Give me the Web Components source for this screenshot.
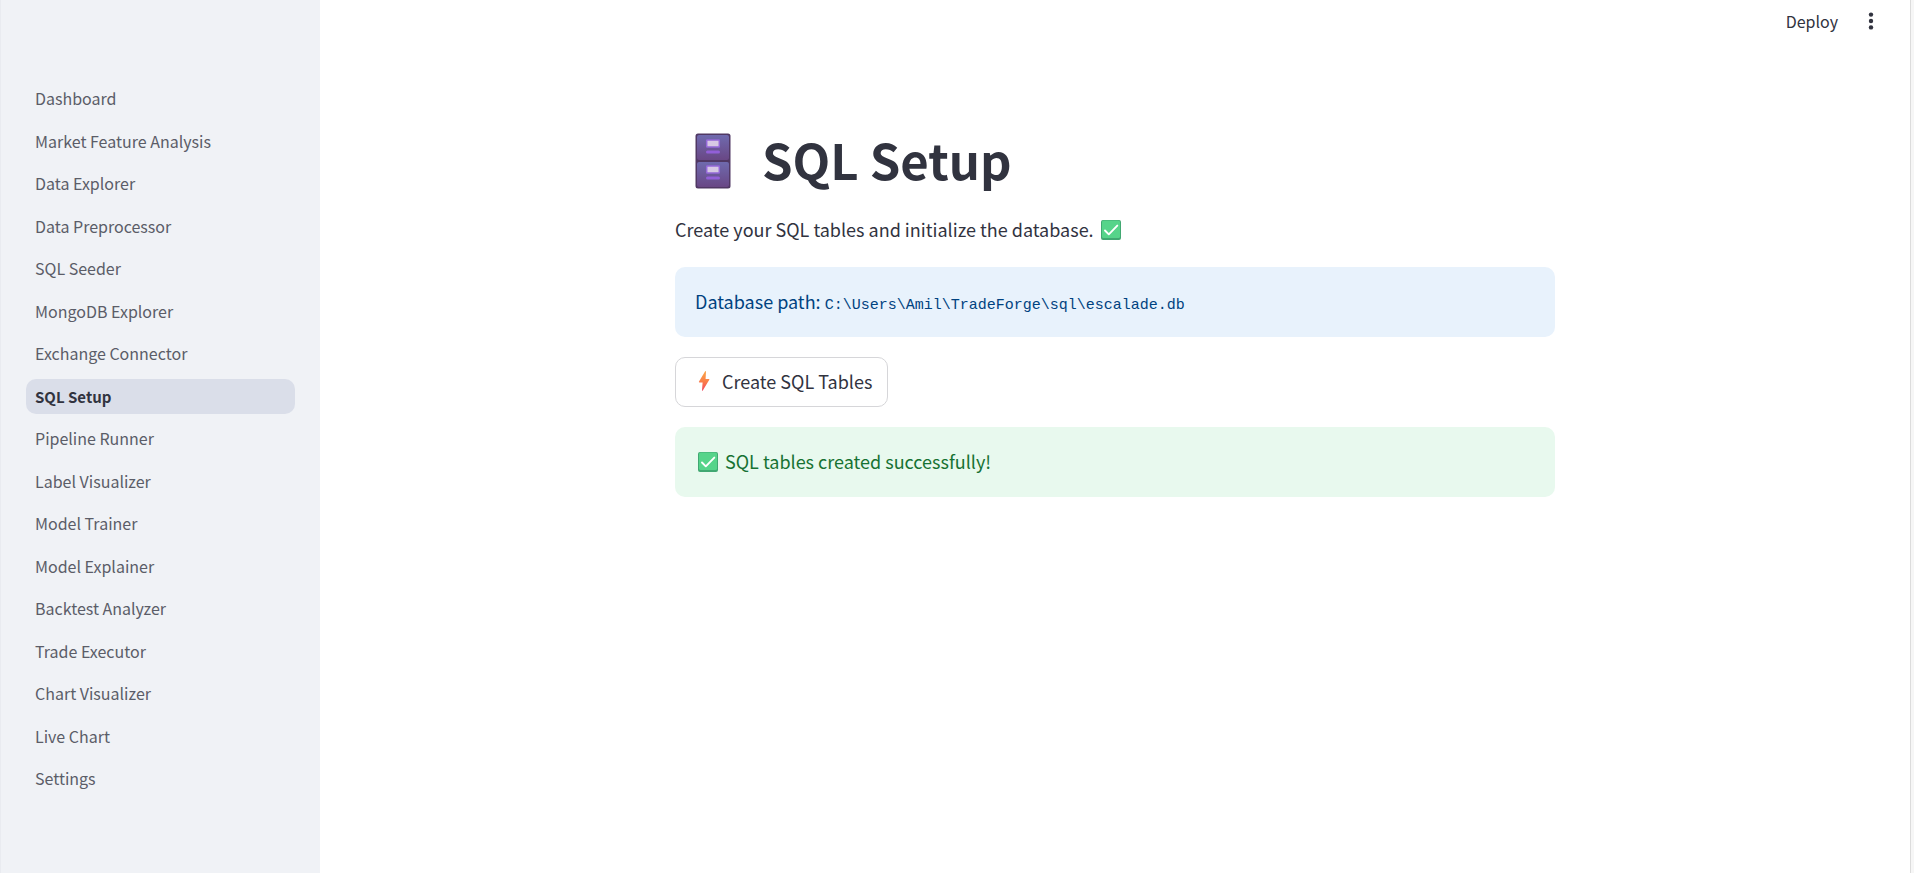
<!DOCTYPE html>
<html lang="en">
<head>
<meta charset="utf-8">
<title>SQL Setup</title>
<style>
  html, body { margin: 0; height: 100%; }
  body {
    background: #fff;
    color: #31333f;
    font-family: "Noto Sans CJK SC", "Open Sans", sans-serif;
    font-size: 18px;
    line-height: 30px;
  }
</style>
</head>
<body>
<app-shell>
  <side-nav slot="sidebar">
    <nav-item>Dashboard</nav-item>
    <nav-item>Market Feature Analysis</nav-item>
    <nav-item>Data Explorer</nav-item>
    <nav-item>Data Preprocessor</nav-item>
    <nav-item>SQL Seeder</nav-item>
    <nav-item>MongoDB Explorer</nav-item>
    <nav-item>Exchange Connector</nav-item>
    <nav-item active>SQL Setup</nav-item>
    <nav-item>Pipeline Runner</nav-item>
    <nav-item>Label Visualizer</nav-item>
    <nav-item>Model Trainer</nav-item>
    <nav-item>Model Explainer</nav-item>
    <nav-item>Backtest Analyzer</nav-item>
    <nav-item>Trade Executor</nav-item>
    <nav-item>Chart Visualizer</nav-item>
    <nav-item>Live Chart</nav-item>
    <nav-item>Settings</nav-item>
  </side-nav>
  <top-bar slot="header"></top-bar>
  <page-title>SQL Setup</page-title>
  <page-text>Create your SQL tables and initialize the database. <check-icon></check-icon></page-text>
  <alert-box kind="info">Database path: <inline-code>C:\Users\Amil\TradeForge\sql\escalade.db</inline-code></alert-box>
  <action-button>Create SQL Tables</action-button>
  <alert-box kind="success"><check-icon></check-icon> SQL tables created successfully!</alert-box>
</app-shell>

<script>
  const define = (name, html, setup) => {
    const template = document.createElement("template");
    template.innerHTML = html;
    customElements.define(name, class extends HTMLElement {
      constructor() {
        super();
        this.attachShadow({ mode: "open" }).append(template.content.cloneNode(true));
      }
      connectedCallback() { if (setup) setup(this); }
    });
  };

  define("app-shell", `
    <style>
      :host { display: grid; grid-template-columns: 320px minmax(0, 1fr) 4px; min-height: 100%; }
      aside { background: #f0f2f6; border-left: 1px solid #e9ebf0; }
      .content { min-width: 0; }
      main { box-sizing: border-box; max-width: 920px; margin: 0 auto; padding: 60px 20px; display: flex; flex-direction: column; gap: 20px; }
      .gutter { background: #f6f6f6; border-left: 1px solid #dcdcdc; }
    </style>
    <aside><slot name="sidebar"></slot></aside>
    <div class="content">
      <slot name="header"></slot>
      <main><slot></slot></main>
    </div>
    <div class="gutter"></div>`);

  define("side-nav", `
    <style>
      :host { display: block; padding: 81px 25px 60px; }
      nav { display: flex; flex-direction: column; justify-content: space-between; min-height: 715px; }
    </style>
    <nav aria-label="Pages"><slot></slot></nav>`);

  define("nav-item", `
    <style>
      :host { display: block; }
      a { display: block; padding: 0 9px; border-radius: 10px; font-size: 16px; line-height: 35px; color: #5b5d68; text-decoration: none; white-space: nowrap; }
      :host([active]) a { background: #dadee9; color: #31333f; font-size: 15px; font-weight: 600; }
    </style>
    <a href="#"><slot></slot></a>`, el => {
      const link = el.shadowRoot.querySelector("a");
      link.setAttribute("href", "#" + el.textContent.trim().toLowerCase().replace(/\s+/g, "-"));
      if (el.hasAttribute("active")) link.setAttribute("aria-current", "page");
    });

  define("top-bar", `
    <style>
      :host { display: block; }
      header { display: flex; justify-content: flex-end; align-items: center; gap: 19px; padding: 4px 26px 6px 0; }
      button { border: 0; padding: 0; background: none; color: #31333f; font: inherit; font-size: 16px; line-height: 34px; }
      .menu { display: flex; align-items: center; justify-content: center; width: 27px; height: 34px; }
    </style>
    <header>
      <button type="button">Deploy</button>
      <button type="button" class="menu" aria-label="Main menu">
        <svg width="6" height="18" viewBox="0 0 6 18" fill="#31333f"><circle cx="3" cy="2.6" r="2.2"/><circle cx="3" cy="9" r="2.2"/><circle cx="3" cy="15.4" r="2.2"/></svg>
      </button>
    </header>`);

  define("page-title", `
    <style>
      :host { display: block; padding: 22px 0 2px; }
      h1 { display: flex; align-items: center; gap: 31px; margin: 0; padding-left: 20px; font-size: 49px; line-height: 66px; font-weight: 700; }
      svg { flex: none; margin-top: 4px; }
    </style>
    <h1>
      <svg width="36" height="56" viewBox="0 0 36 56" aria-hidden="true">
        <defs>
          <linearGradient id="drawer" x1="0" y1="0" x2="0" y2="1"><stop offset="0" stop-color="#6f6aae"/><stop offset="1" stop-color="#694785"/></linearGradient>
          <linearGradient id="label" x1="0" y1="0" x2="1" y2="1"><stop offset="0" stop-color="#d9c7ea"/><stop offset="1" stop-color="#d5cbdf"/></linearGradient>
        </defs>
        <rect x=".5" y=".5" width="35" height="55" rx="2.5" fill="#503864"/>
        <rect x="2" y="2" width="32" height="25" rx="2" fill="url(#drawer)"/>
        <rect x="2" y="29" width="32" height="25" rx="2" fill="url(#drawer)"/>
        <g fill="url(#label)" stroke="#9468d8" stroke-width="1.5">
          <rect x="11.7" y="7" width="12.6" height="7" rx=".5"/>
          <rect x="11.7" y="33" width="12.6" height="7" rx=".5"/>
        </g>
        <rect x="11" y="17.5" width="14" height="3" rx="1.5" fill="#925fd8"/>
        <rect x="11" y="43.5" width="14" height="3" rx="1.5" fill="#925fd8"/>
      </svg>
      <span><slot></slot></span>
    </h1>`);

  define("page-text", `
    <style>
      :host { display: block; padding-bottom: 3px; }
      p { margin: 0; }
    </style>
    <p><slot></slot></p>`);

  define("check-icon", `
    <style>
      :host { display: inline-block; padding: 0 3px; line-height: 0; vertical-align: -3px; }
    </style>
    <svg width="20" height="20" viewBox="0 0 20 20" aria-hidden="true">
      <rect width="20" height="20" rx="2" fill="#41a872"/>
      <rect x="1" y=".5" width="18" height="17.5" rx="1.5" fill="#56d48a"/>
      <path d="M4 10.5 7.8 14.3 16.3 5.6" fill="none" stroke="#fff" stroke-width="1.9" stroke-linecap="round" stroke-linejoin="round"/>
    </svg>`);

  define("inline-code", `
    <style>
      :host { display: inline; line-height: 15px; }
      code { font-family: "Liberation Mono", monospace; font-size: 15px; }
    </style>
    <code><slot></slot></code>`);

  define("alert-box", `
    <style>
      :host { display: block; padding: 19px 20px 21px; border-radius: 10px; background: #e8f2fc; color: #004280; }
      :host([kind="success"]) { background: #e8f9ee; color: #177233; }
    </style>
    <div role="status"><slot></slot></div>`);

  define("action-button", `
    <style>
      :host { display: block; line-height: 0; }
      button { display: inline-flex; align-items: center; gap: 12px; padding: 8px 15px 10px 22px; border: 1px solid #d6d6d9; border-radius: 10px; background: #fff; color: #31333f; font: inherit; line-height: 30px; }
    </style>
    <button type="button">
      <svg width="12" height="20" viewBox="0 0 12 20" aria-hidden="true">
        <defs><linearGradient id="bolt" x1="0" y1="0" x2="0" y2="1"><stop offset="0" stop-color="#f9a648"/><stop offset=".5" stop-color="#fb8148"/><stop offset="1" stop-color="#f2475f"/></linearGradient></defs>
        <path d="M7 .4 1 10.6q-.4.9.5.9H4.600L4 19.400q.2.700.8 0L11.300 8.800q.4-.9-.5-.9H7.600L8 .5Q7.600-.2 7 .4Z" fill="url(#bolt)"/>
      </svg>
      <span><slot></slot></span>
    </button>`);
</script>
</body>
</html>
